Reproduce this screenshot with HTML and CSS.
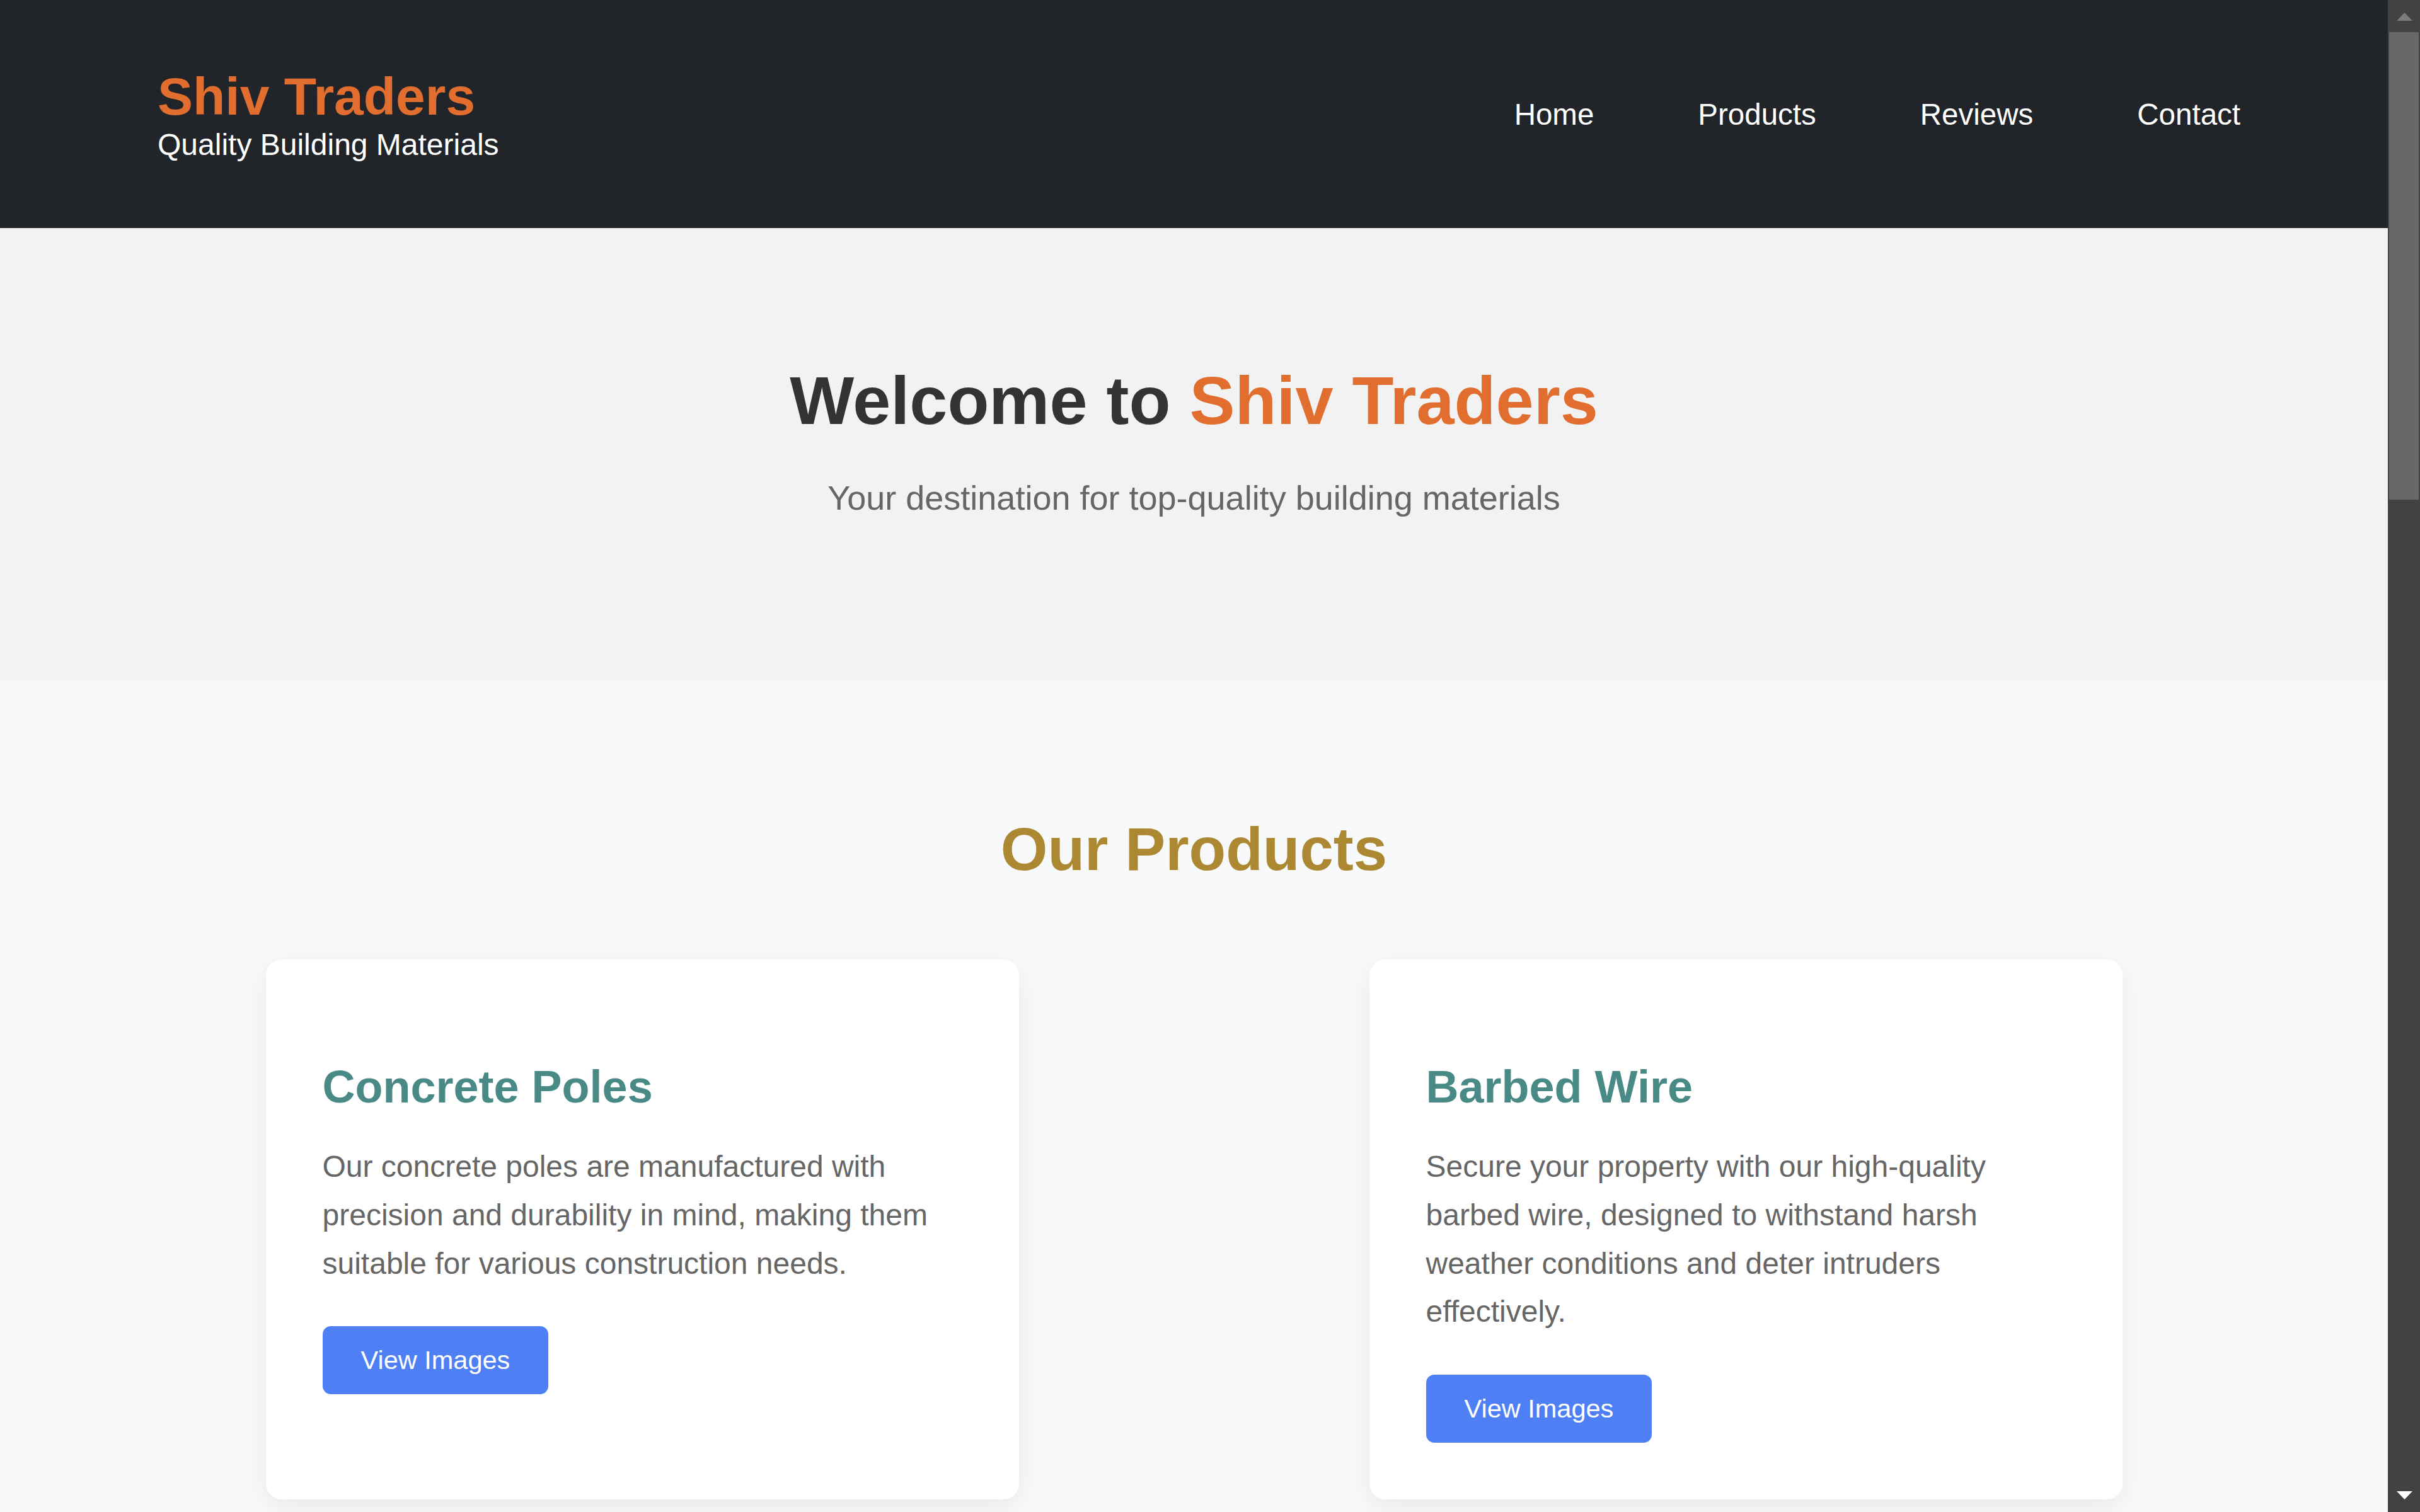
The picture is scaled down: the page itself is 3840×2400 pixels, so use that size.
FILE: index.html
```html
<!DOCTYPE html>
<html lang="en">
<head>
<meta charset="utf-8">
<title>Shiv Traders - Quality Building Materials</title>
<link rel="stylesheet" href="styles.css">
</head>
<body>
<div class="page">
<header class="site-header">
  <div class="brand">
    <h1 class="brand-name">Shiv Traders</h1>
    <p class="brand-tag">Quality Building Materials</p>
  </div>
  <nav class="main-nav">
    <ul class="nav-list">
      <li><a href="#home" class="nav-link">Home</a></li>
      <li><a href="#products" class="nav-link">Products</a></li>
      <li><a href="#reviews" class="nav-link">Reviews</a></li>
      <li><a href="#contact" class="nav-link">Contact</a></li>
    </ul>
  </nav>
</header>

<section class="hero" id="home">
  <h2 class="hero-title">Welcome to <span class="accent">Shiv Traders</span></h2>
  <p class="hero-sub">Your destination for top-quality building materials</p>
</section>

<section class="products" id="products">
  <h2 class="section-title">Our Products</h2>
  <div class="product-grid">
    <article class="product-card">
      <h3 class="product-name">Concrete Poles</h3>
      <p class="product-text">Our concrete poles are manufactured with precision and durability in mind, making them suitable for various construction needs.</p>
      <button class="btn" type="button">View Images</button>
    </article>
    <article class="product-card">
      <h3 class="product-name">Barbed Wire</h3>
      <p class="product-text">Secure your property with our high-quality barbed wire, designed to withstand harsh weather conditions and deter intruders effectively.</p>
      <button class="btn" type="button">View Images</button>
    </article>
  </div>
</section>

<section class="reviews" id="reviews">
  <h2 class="section-title">Customer Reviews</h2>
  <div class="review-list">
    <blockquote class="review">"Excellent quality poles, delivered on time."<cite class="review-by">- Ramesh K.</cite></blockquote>
    <blockquote class="review">"The barbed wire has held up through two monsoons."<cite class="review-by">- Suresh P.</cite></blockquote>
    <blockquote class="review">"Fair prices and very helpful staff."<cite class="review-by">- Anita S.</cite></blockquote>
  </div>
</section>

<section class="contact" id="contact">
  <h2 class="section-title">Contact Us</h2>
  <p class="contact-line">Phone: +91 98765 43210</p>
  <p class="contact-line">Email: info@shivtraders.in</p>
  <p class="contact-line">Visit our yard for bulk orders and site deliveries.</p>
</section>

<footer class="site-footer">
  <p class="footer-text">&copy; Shiv Traders. All rights reserved.</p>
</footer>
</div>

<div class="scrollbar" aria-hidden="true">
  <div class="sb-button sb-up">
    <svg class="sb-arrow" width="25" height="13" viewBox="0 0 25 13"><polygon points="12.5,0 25,13 0,13" fill="#7b7b7b"/></svg>
  </div>
  <div class="sb-thumb"></div>
  <div class="sb-track"></div>
  <div class="sb-button sb-down">
    <svg class="sb-arrow" width="25" height="13" viewBox="0 0 25 13"><polygon points="0,0 25,0 12.5,13" fill="#ffffff"/></svg>
  </div>
</div>
</body>
</html>
```
FILE: styles.css
```css
html {
  background: #f8f9fa;
}
body {
  margin: 0;
  font-family: "Liberation Sans", Arial, sans-serif;
  background: #f8f9fa;
  color: #333;
}
.page {
  margin-right: 51px;
}

/* Browser scrollbar as captured */
.scrollbar {
  position: fixed;
  top: 0;
  right: 0;
  width: 51px;
  height: 100vh;
  background: #424242;
  display: flex;
  flex-direction: column;
}
.sb-button {
  height: 51px;
  flex: none;
  display: flex;
  justify-content: center;
}
.sb-up {
  align-items: flex-start;
}
.sb-up .sb-arrow {
  margin-top: 20px;
}
.sb-down {
  align-items: flex-end;
}
.sb-down .sb-arrow {
  margin-bottom: 20px;
}
.sb-arrow {
  display: block;
  margin-left: 1px;
}
.sb-thumb {
  flex: none;
  height: 742px;
  margin: 0 2px;
  background: #686868;
}
.sb-track {
  flex: 1;
}

/* Header */
.site-header {
  box-sizing: border-box;
  height: 362px;
  background: #212529;
  display: flex;
  align-items: center;
  justify-content: space-between;
  padding: 0 234px 0 250px;
}
.brand-name {
  margin: 0;
  font-size: 84px;
  font-weight: 700;
  color: #e16d2e;
}
.brand-tag {
  margin: 0;
  font-size: 48px;
  color: #ffffff;
}
.nav-list {
  list-style: none;
  margin: 0;
  padding: 0;
  display: flex;
  gap: 165px;
}
.nav-link {
  color: #ffffff;
  text-decoration: none;
  font-size: 47.5px;
}

/* Hero */
.hero {
  box-sizing: border-box;
  height: 718px;
  background: #f2f2f2;
  text-align: center;
  padding-top: 211px;
}
.hero-title {
  margin: 0 0 61px;
  font-size: 108px;
  font-weight: 700;
  color: #333333;
}
.accent {
  color: #e16d2e;
}
.hero-sub {
  margin: 0;
  font-size: 54px;
  color: #666666;
}

/* Products */
.products {
  padding: 213px 0 200px;
  background: #f8f9fa;
}
.section-title {
  margin: 0 0 120px;
  text-align: center;
  font-size: 96px;
  font-weight: 700;
  color: #ad8832;
}
.product-grid {
  display: grid;
  grid-template-columns: 1195px 1195px;
  column-gap: 556px;
  justify-content: center;
}
.product-card {
  background: #ffffff;
  border-radius: 25px;
  padding: 90px;
  box-shadow: 0 12px 40px rgba(0, 0, 0, 0.07);
}
.product-name {
  margin: 71px 0 48px;
  font-size: 72px;
  font-weight: 700;
  color: #4a8a86;
}
.product-text {
  margin: 0 0 61px;
  font-size: 48px;
  line-height: 1.6;
  color: #666666;
}
.btn {
  border: none;
  border-radius: 13px;
  background: #4f7ff5;
  color: #ffffff;
  font-family: "Liberation Sans", Arial, sans-serif;
  font-size: 41.5px;
  padding: 30px 61px;
  cursor: pointer;
}

/* Reviews */
.reviews {
  padding: 200px 250px;
  background: #f2f2f2;
}
.review-list {
  display: flex;
  flex-direction: column;
  gap: 80px;
  align-items: center;
}
.review {
  margin: 0;
  width: 2000px;
  background: #ffffff;
  border-radius: 25px;
  padding: 90px;
  font-size: 48px;
  line-height: 1.6;
  color: #666666;
}
.review-by {
  display: block;
  margin-top: 30px;
  font-style: normal;
  color: #4a8a86;
}

/* Contact */
.contact {
  padding: 200px 250px 300px;
  text-align: center;
}
.contact-line {
  margin: 0 0 40px;
  font-size: 48px;
  color: #666666;
}

.site-footer {
  background: #212529;
  padding: 100px 0;
  text-align: center;
}
.footer-text {
  margin: 0;
  font-size: 40px;
  color: #ffffff;
}
```
